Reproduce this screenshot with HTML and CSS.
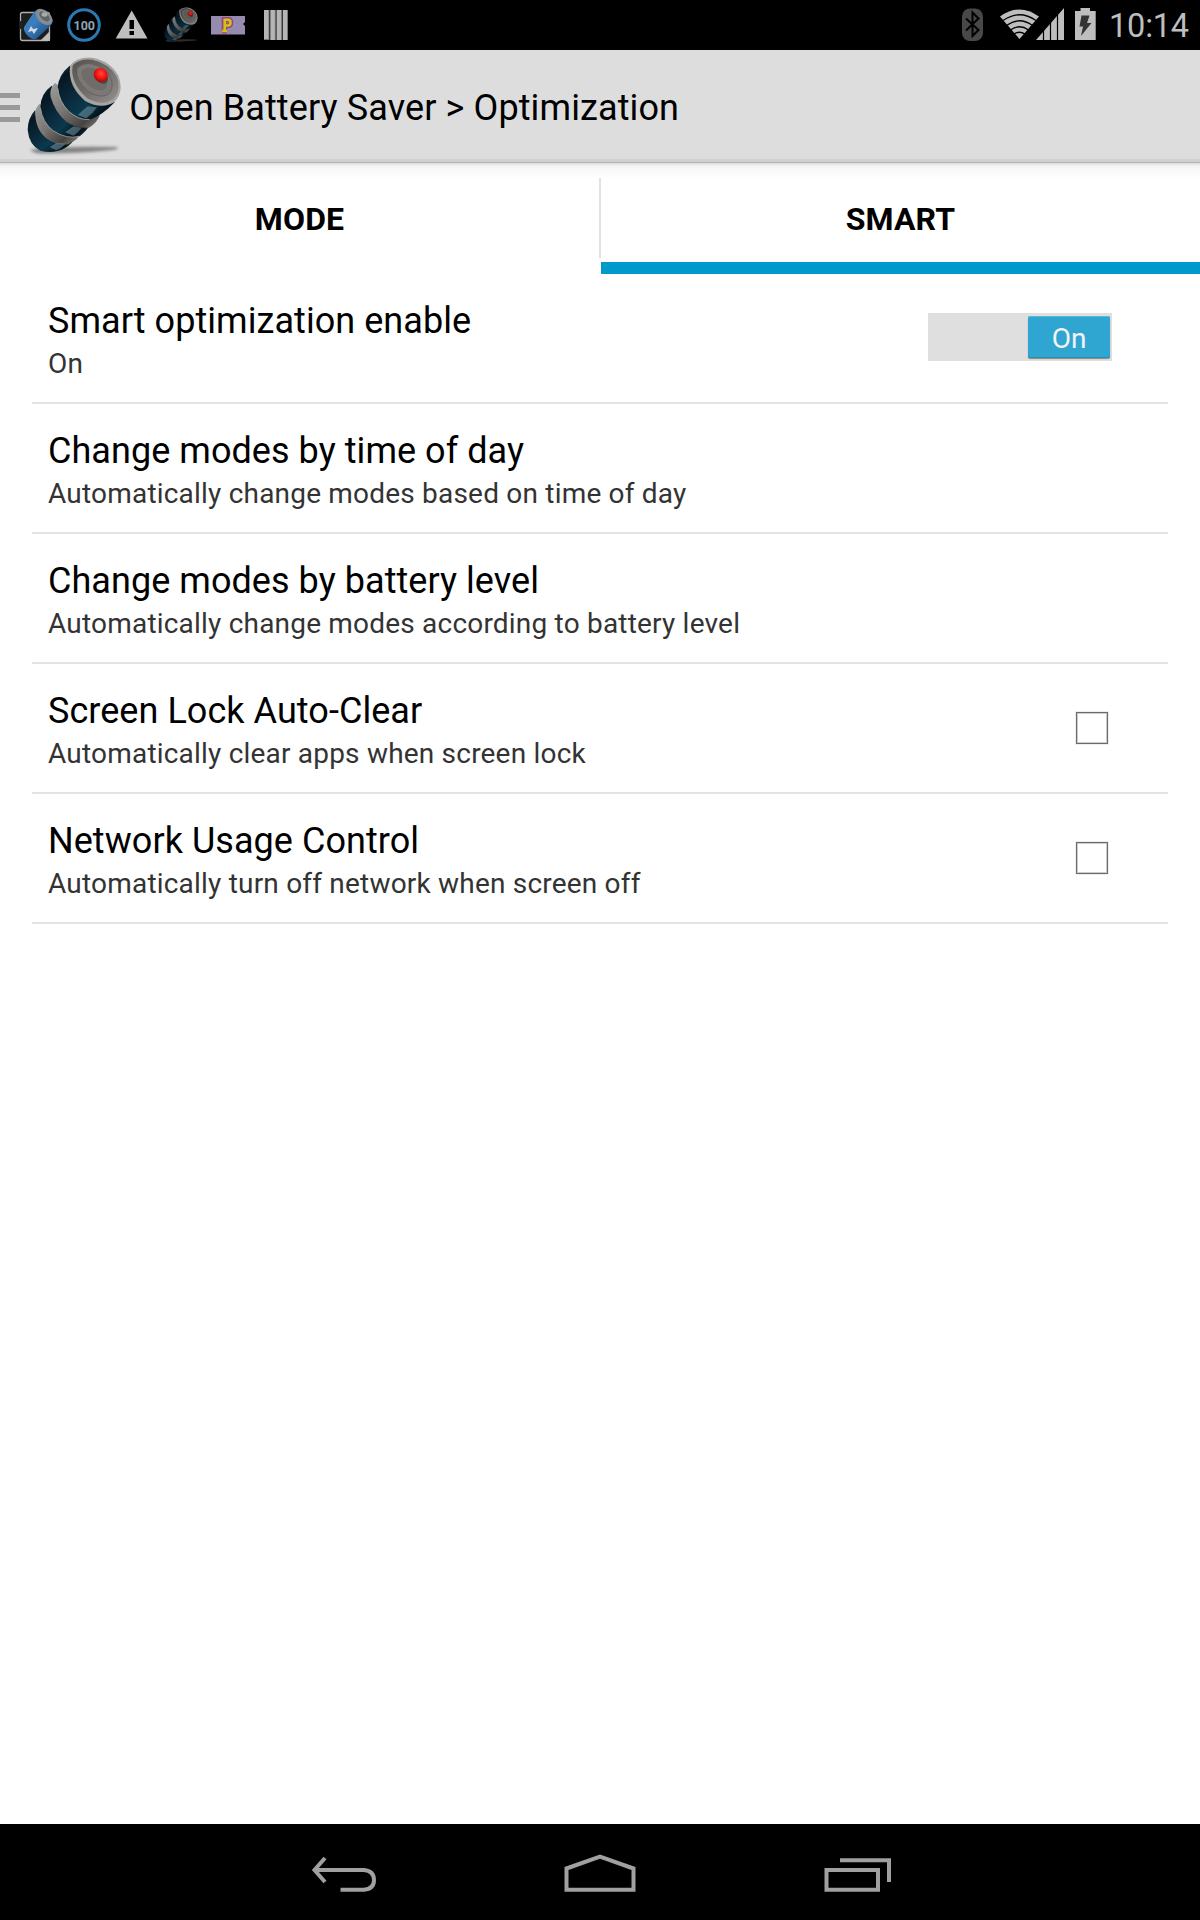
FILE: index.html
```html
<!DOCTYPE html>
<html lang="en">
<head>
<meta charset="utf-8">
<title>Open Battery Saver</title>
<link rel="stylesheet" href="styles.css">
</head>
<body>
<svg class="defs" width="0" height="0" aria-hidden="true">
  <defs>
    <linearGradient id="navy" x1="0" y1="0" x2="1" y2="1">
      <stop offset="0" stop-color="#2d4a55"/><stop offset=".15" stop-color="#061722"/><stop offset=".45" stop-color="#0a2c3e"/><stop offset=".62" stop-color="#0b384d"/><stop offset=".82" stop-color="#04121b"/><stop offset="1" stop-color="#1d2a30"/>
    </linearGradient>
    <linearGradient id="steel" x1="0" y1="0" x2="1" y2="1">
      <stop offset="0" stop-color="#a09e9b"/><stop offset=".45" stop-color="#777471"/><stop offset=".78" stop-color="#45423f"/><stop offset="1" stop-color="#8a8683"/>
    </linearGradient>
    <linearGradient id="cap" x1="0" y1="0" x2="1" y2="1">
      <stop offset="0" stop-color="#56534f"/><stop offset=".5" stop-color="#6f6c69"/><stop offset="1" stop-color="#93908d"/>
    </linearGradient>
    <radialGradient id="red" cx=".45" cy=".4" r=".6">
      <stop offset="0" stop-color="#ff4a43"/><stop offset=".6" stop-color="#f3130f"/><stop offset="1" stop-color="#a90a08"/>
    </radialGradient>
    <linearGradient id="blue" x1="0" y1="0" x2="1" y2="1">
      <stop offset="0" stop-color="#3d78ad"/><stop offset=".4" stop-color="#3a7fc0"/><stop offset="1" stop-color="#123e70"/>
    </linearGradient>
    <filter id="soft" x="-20%" y="-100%" width="140%" height="300%"><feGaussianBlur stdDeviation="5"/></filter>
    <symbol id="battery" viewBox="70 20 300 310">
      <path d="M90 305Q150 293 350 296Q366 302 330 306Q200 318 110 315Z" fill="#555" opacity=".65" filter="url(#soft)"/>
      <path d="M106 186Q84 210 84 245Q88 290 122 307Q160 318 195 300Q220 284 226 268Q150 262 106 186Z" fill="url(#navy)"/>
      <path d="M107 184Q122 240 164 266Q198 284 232 266Q222 280 206 288Q168 292 140 270Q104 240 107 184Z" fill="url(#steel)"/>
      <path d="M120 166Q105 180 107 197Q116 238 152 270Q180 290 222 279Q246 262 240 244Z" fill="url(#steel)"/>
      <path d="M156 112Q122 136 122 178Q128 222 160 247Q200 274 240 264Q260 248 268 234Q180 210 156 112Z" fill="url(#navy)"/>
      <path d="M166 104Q148 120 153 146Q166 192 200 220Q228 240 268 238Q294 222 302 196Z" fill="url(#steel)"/>
      <path d="M210 52Q176 80 174 118Q178 160 208 190Q238 216 270 214Q308 202 345 162Z" fill="url(#navy)"/>
      <path d="M234 200L264 174L292 177Q280 196 260 210ZM196 252L222 234L246 238Q236 252 222 262ZM150 297L170 283L198 286Q186 300 170 306Z" fill="#7fa3b5" opacity=".5"/>
      <g transform="translate(215 165) scale(1.06 1.03) translate(-215 -165)">
        <path d="M212 54Q232 28 275 32Q326 42 348 84Q366 132 336 162Q302 184 254 158Q202 112 212 54Z" fill="#a7a4a1"/>
        <path d="M219 54Q238 34 274 38Q322 48 344 88Q358 130 332 154Q302 174 260 150Q210 106 219 54Z" fill="url(#cap)"/>
        <path d="M231 64Q246 46 273 50Q314 60 329 96Q336 130 315 141Q292 150 262 130Q226 98 231 64Z" fill="#7b7875" stroke="#5c5956" stroke-width="2"/>
        <path d="M241 72Q254 54 277 61Q307 70 318 98Q322 123 304 129Q284 133 262 113Q239 92 241 72Z" fill="#6f6c69" stroke="#858280" stroke-width="2"/>
      </g>
      <ellipse cx="305" cy="86" rx="23" ry="17" fill="#4c4845" transform="rotate(45 305 86)"/>
      <ellipse cx="303" cy="80" rx="22" ry="20" fill="url(#red)" transform="rotate(45 303 80)"/>
      <path d="M174 118Q178 160 208 190Q238 216 270 214M122 178Q128 222 160 247Q200 274 240 264" fill="none" stroke="#b5b2af" stroke-width="3" opacity=".75"/>
    </symbol>
  </defs>
</svg>
<div class="screen">
  <header class="status">
    <div class="notifications">
      <svg class="note" viewBox="12 0 48 50">
        <rect x="20.5" y="12.500" width="29" height="28" rx="2" fill="#1c1d1f" stroke="#b0b0b0" stroke-width="1.300"/>
        <path d="M19.500 21h3v8h-3z" fill="#222"/>
        <path d="M40 41L50 31V41Z" fill="#bbb"/>
        <path d="M34 12Q38 8 44 10Q51 13 53 21Q52 25 48 28L36 39Q31 40 27 35Q23 30 24 27Z" fill="url(#blue)"/>
        <ellipse cx="44" cy="17" rx="10" ry="6.300" fill="#83898c" transform="rotate(42 44 17)"/>
        <ellipse cx="44.500" cy="16.500" rx="7" ry="4.300" fill="#5f6568" stroke="#999" transform="rotate(42 44.500 16.500)"/>
        <ellipse cx="44.500" cy="14.500" rx="3" ry="2.200" fill="#aaa"/>
        <path d="M28 32L31 26L33 29L38 28L34 34L32 31Z" fill="#ccd8e2"/>
      </svg>
      <svg class="note" viewBox="60 0 48 50">
        <circle cx="84" cy="25" r="15.300" fill="none" stroke="#2a78b4" stroke-width="3"/>
        <text class="level" x="84.300" y="29.500" text-anchor="middle">100</text>
      </svg>
      <svg class="note" viewBox="108 0 48 50">
        <path d="M131.700 10.500L147.500 38.500H115.700Z" fill="#bebebe"/>
        <path d="M129.500 20h4.500v9h-4.500zM129.500 31h4.500v4h-4.500z" fill="#000"/>
      </svg>
      <svg class="note" viewBox="156 0 48 50"><use href="#battery" x="162.500" y="6.500" width="36" height="37" opacity=".82"/></svg>
      <svg class="note" viewBox="204 0 48 50">
        <path d="M211 16H245V22L243 24L245 26V34.500H211Z" fill="#948bae"/>
        <path d="M224.200 31V19.500H228Q230.800 19.500 230.800 22.600T228 25.800H224.500M222 31H227" fill="none" stroke="#98437f" stroke-width="5"/>
        <path d="M224.700 31.500V19.700H228Q230.500 19.700 230.500 22.600T228 25.500H224.500M222.200 31H227" fill="none" stroke="#d6c30f" stroke-width="2.600"/>
      </svg>
      <svg class="note" viewBox="252 0 48 50">
        <path d="M264 10h5v30h-5zM270.300 10h5v30h-5zM276.500 10h5v30h-5zM282.700 10h5v30h-5z" fill="#b5b5b5"/>
        <path d="M264 39h5v1h-5zM268.500 10h1v30h-1zM274.800 10h1v30h-1zM281 10h1v30h-1zM287 10h1v30h-1z" fill="#777"/>
      </svg>
    </div>
    <div class="system">
      <svg width="140" height="50" viewBox="960 0 140 50">
        <rect x="962" y="8.500" width="21" height="32.500" rx="8" fill="#484848"/>
        <path d="M966 18.500L978.500 30L972.500 36V12.500L978.500 18.500L966 30.500" fill="none" stroke="#000" stroke-width="2"/>
        <path d="M1000 16.500Q1019.500 2.500 1039 16.500L1019.500 39Z" fill="#bebebe"/>
        <path d="M1003 20.500Q1019.500 9 1036 20.500M1006.500 25.500Q1019.500 16 1032.500 25.500M1010.500 30Q1019.500 23.500 1028.500 30M1014 34Q1019.500 30.500 1025 34" fill="none" stroke="#000" stroke-width="1.300"/>
        <path d="M1036 40L1064 8V40Z" fill="#bebebe"/>
        <path d="M1043.500 28V40M1050.500 20V40M1057.500 12V40" stroke="#000" stroke-width="1.200"/>
        <path d="M1080.500 8H1090V11H1095.700V40H1075V11H1080.500Z" fill="#bebebe"/>
        <path d="M1081.500 15.500H1089.500L1087 23H1091.500L1081 36L1083 26.500H1079.500Z" fill="#333"/>
      </svg>
      <span class="clock">10:14</span>
    </div>
  </header>

  <div class="action-bar">
    <div class="drawer"><i></i><i></i><i></i></div>
    <svg class="logo" viewBox="70 20 300 310"><use href="#battery" x="70" y="20" width="300" height="310"/></svg>
    <h1>Open Battery Saver &gt; Optimization</h1>
  </div>

  <nav class="tabs">
    <a class="tab">MODE</a>
    <span class="tab-divider"></span>
    <a class="tab active">SMART</a>
  </nav>

  <main class="list">
    <section class="row">
      <div class="copy"><h2>Smart optimization enable</h2><p>On</p></div>
      <div class="switch"><span class="thumb">On</span></div>
    </section>
    <section class="row">
      <div class="copy"><h2>Change modes by time of day</h2><p>Automatically change modes based on time of day</p></div>
    </section>
    <section class="row">
      <div class="copy"><h2>Change modes by battery level</h2><p>Automatically change modes according to battery level</p></div>
    </section>
    <section class="row">
      <div class="copy"><h2>Screen Lock Auto-Clear</h2><p>Automatically clear apps when screen lock</p></div>
      <span class="check"></span>
    </section>
    <section class="row">
      <div class="copy"><h2>Network Usage Control</h2><p>Automatically turn off network when screen off</p></div>
      <span class="check"></span>
    </section>
  </main>

  <footer class="nav-bar">
    <svg width="66" height="96" viewBox="311 1824 66 96"><path d="M325 1858L314.500 1870L325 1882M314.500 1870H364Q374 1871 374 1880T364 1889.700H340.500" fill="none" stroke="#a0a0a0" stroke-width="4"/></svg>
    <svg width="72" height="96" viewBox="564 1824 72 96"><path d="M566.500 1868.500L600 1856.500L633.500 1868.500V1889.700H566.500Z" fill="none" stroke="#a0a0a0" stroke-width="4"/></svg>
    <svg width="68" height="96" viewBox="824 1824 68 96"><path d="M826.500 1870H878V1889.700H826.500ZM840 1860.200H889V1882" fill="none" stroke="#a0a0a0" stroke-width="4"/></svg>
  </footer>
</div>
</body>
</html>
```
FILE: styles.css
```css
* { box-sizing: border-box; }
body { margin: 0; background: #fff; font-family: Roboto, sans-serif; color: #000; }
h1, h2, p { margin: 0; font-weight: 400; white-space: nowrap; }
.defs { position: absolute; }
.screen { width: 1200px; height: 1920px; display: flex; flex-direction: column; background: #fff; }

.status { height: 50px; background: #000; display: flex; justify-content: space-between; }
.notifications { display: flex; padding-left: 12px; }
.note { width: 48px; height: 50px; }
.level { font: 700 12.5px Roboto, sans-serif; fill: #8ea6b6; }
.system { display: flex; width: 240px; }
.clock { width: 100px; padding-left: 9px; font-size: 32.5px; line-height: 52px; letter-spacing: -0.2px; color: #bebebe; white-space: nowrap; }

.action-bar { height: 113px; background: #ddd; border-bottom: 1px solid #b3b3b3; box-shadow: inset 0 -3px #d0d0d0; display: flex; align-items: flex-start; }
.drawer { width: 20px; padding-top: 43px; display: flex; flex-direction: column; gap: 7px; }
.drawer i { height: 5px; background: #999; }
.logo { width: 100px; height: 103.3px; margin: 4.7px 0 0 3.3px; }
h1 { margin-left: 6px; font-size: 36px; line-height: 42px; padding-top: 37px; letter-spacing: 0.11px; }

.tabs { height: 111px; display: flex; background: linear-gradient(#ddd, #f3f3f3 3px, #fafafa 8px, #fff 17px); }
.tab { width: 599px; height: 111px; padding-top: 37px; text-align: center; font-size: 32px; font-weight: 700; line-height: 38px; letter-spacing: 0.15px; }
.tab-divider { width: 2px; height: 80px; margin-top: 15px; background: #e2e2e2; }
.tab.active { border-bottom: 12px solid #09c; }

.list { flex: 1; margin: 0 32px; }
.row { height: 130px; padding: 0 56px 0 16px; border-bottom: 2px solid #e3e3e3; display: flex; justify-content: space-between; align-items: center; }
.copy { margin-top: 5px; }
h2 { font-size: 36px; line-height: 44px; letter-spacing: 0.05px; }
p { margin-top: 3px; font-size: 28px; line-height: 36px; letter-spacing: 0.2px; color: #333; }
.switch { width: 184px; height: 48px; margin-top: -2px; background: #dfdfdf; display: flex; justify-content: flex-end; padding: 3px 2px 3px 0; }
.thumb { width: 82px; height: 42px; border-radius: 2px; background: #2fa6d1; box-shadow: inset 0 1px #57bbdc, inset 0 -1px #278db3, 0 1px 1px #888; color: #f3f3f3; font-size: 28px; line-height: 45px; text-align: center; }
.check { width: 32px; height: 32px; margin-right: 4px; border: 1px solid #6c6c6c; box-shadow: inset 0 0 0 1px #ccc, 0 0 0 1px #eee; }

.nav-bar { height: 96px; background: #000; display: grid; grid-template-columns: 253px 260px 68px; padding-left: 311px; }
```
